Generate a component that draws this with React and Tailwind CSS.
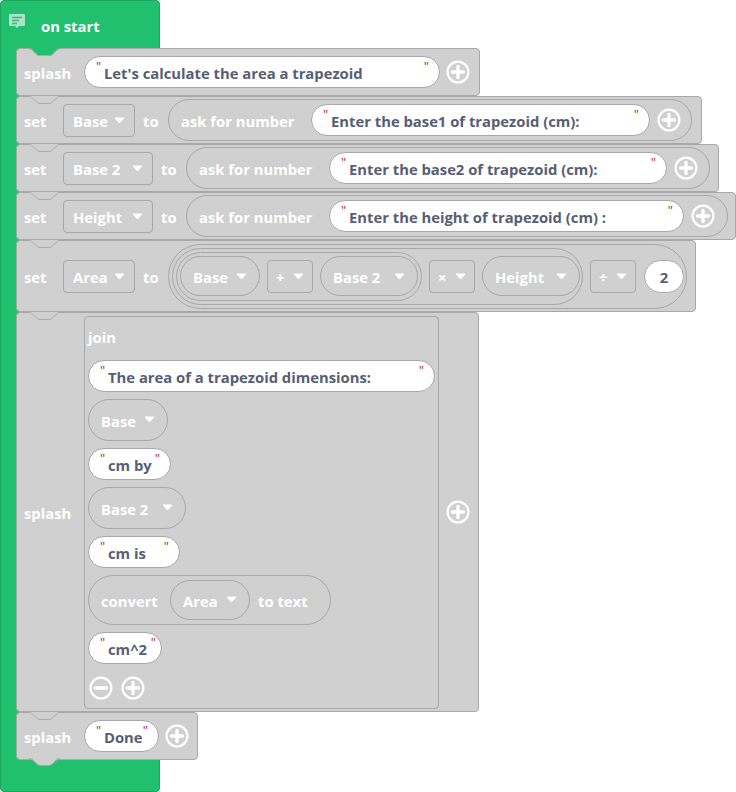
import React from "react";

const GRAY = "#d0d0d0";
const EDGE = "#a8a8a8";

// white ring with a plus or minus, used on every block that can grow
const RoundButton = ({ minus = false }) => (
  <svg width="24" height="24" viewBox="0 0 24 24" className="shrink-0">
    <circle cx="12" cy="12" r="10.4" fill="none" stroke="#fff" strokeWidth="2.2" />
    <path
      d={minus ? "M6.5 12h11" : "M6.5 12h11M12 6.5v11"}
      stroke="#fff"
      strokeWidth="3.4"
      strokeLinecap="round"
      fill="none"
    />
  </svg>
);

const Caret = () => (
  <svg width="11" height="7" viewBox="0 0 11 7" className="shrink-0">
    <path d="M1 1h9L5.500 6z" fill="#fff" stroke="#fff" strokeWidth="1" strokeLinejoin="round" />
  </svg>
);

const Label = ({ children, className = "" }) => (
  <span className={`pt-[2px] font-bold whitespace-nowrap text-white ${className}`}>{children}</span>
);

// square dropdown such as the variable picker
const Dropdown = ({ text, width, tight = false }) => (
  <div
    className={`flex h-[33px] shrink-0 items-center justify-between rounded-[4px] border border-[#a8a8a8] ${tight ? "px-[8px]" : "px-[9px]"}`}
    style={{ width }}
  >
    <Label>{text}</Label>
    <Caret />
  </div>
);

// round variable reporter
const VarPill = ({ text, width, height = 42 }) => (
  <div
    className="flex shrink-0 items-center justify-between rounded-full border border-[#a8a8a8] px-[12px]"
    style={{ width, height }}
  >
    <Label>{text}</Label>
    <Caret />
  </div>
);

const Quote = ({ className }) => (
  <span
    className={`absolute top-[1px] text-[13px] leading-[16px] font-normal text-[#b52a2a] ${className}`}
  >
    "
  </span>
);

// white string field with red quote marks
const StringPill = ({ text, width, quoteRight = "right-[10px]" }) => (
  <div
    className="relative flex h-[32px] shrink-0 items-center rounded-full border border-[#a8a8a8] bg-white pt-[2px] pl-[19px] font-bold whitespace-nowrap text-[#575e75]"
    style={{ width }}
  >
    <Quote className="left-[11px]" />
    {text}
    <Quote className={quoteRight} />
  </div>
);

// the dent at the top of a block, filled with whatever sits above it
const Notch = ({ fill = GRAY }) => (
  <svg width="40" height="10" viewBox="0 0 40 10" className="absolute -top-[1px] left-[9px]">
    <path d="M2 0v1h1c2 0 3 1 4 2l3 3c1 1 2 2 4 2h9c2 0 3-1 4-2l3-3c1-1 2-2 4-2h1V0z" fill={fill} />
    <path d="M2 .5h1c2 0 3 1 4 2l3 3c1 1 2 2 4 2h9c2 0 3-1 4-2l3-3c1-1 2-2 4-2h1" fill="none" stroke={EDGE} strokeWidth="1" />
  </svg>
);

const Tab = () => (
  <svg width="40" height="10" viewBox="0 0 40 10" className="absolute -bottom-[9px] left-[9px]">
    <path d="M2 0h1c2 0 3 1 4 2l3 3c1 1 2 2 4 2h9c2 0 3-1 4-2l3-3c1-1 2-2 4-2h1z" fill={GRAY} />
    <path d="M3 .5c2 0 3 1 4 2l3 3c1 1 2 2 4 2h9c2 0 3-1 4-2l3-3c1-1 2-2 4-2" fill="none" stroke={EDGE} strokeWidth="1" />
  </svg>
);

const Block = ({ width, height, notch, tab, children }) => (
  <div
    className="relative flex items-center rounded-[4px] border border-[#a8a8a8] bg-[#d0d0d0] pl-[7px]"
    style={{ width, height }}
  >
    <Notch fill={notch} />
    {children}
    {tab && <Tab />}
  </div>
);

const AskRow = ({ varName, varWidth, askWidth, strText, strWidth, blockWidth }) => (
  <Block width={blockWidth} height={48}>
    <Label className="w-[39px]">set</Label>
    <Dropdown text={varName} width={varWidth} />
    <Label className="ml-[8px] w-[25px]">to</Label>
    <div
      className="flex h-[42px] shrink-0 items-center rounded-full border border-[#a8a8a8] pl-[12px]"
      style={{ width: askWidth }}
    >
      <Label className="w-[130px]">ask for number</Label>
      <StringPill text={strText} width={strWidth} />
      <div className="ml-[7px]">
        <RoundButton />
      </div>
    </div>
  </Block>
);

const App = () => {
  return (
    <div className="relative h-[792px] w-[160px] rounded-[4px] border border-[#1ba85e] bg-[#20c06e] font-['Open_Sans',sans-serif] text-[14.8px] leading-[20px]">
      {/* Header */}
      <div className="relative flex h-[47px] items-center pl-[40px]">
        <svg width="16" height="15" viewBox="0 0 16 15" className="absolute top-[13px] left-[8px]">
          <path d="M1 0h14a1 1 0 0 1 1 1v10a1 1 0 0 1-1 1h-5l-2 2-2-2H1a1 1 0 0 1-1-1V1a1 1 0 0 1 1-1z" fill="#a6e6c5" />
          <path d="M3 3.500h10M3 6.500h7M3 9.500h5" stroke="#4fae7f" strokeWidth="1.400" fill="none" />
        </svg>
        <Label>on start</Label>
      </div>

      {/* Blocks */}
      <div className="ml-[15px] flex w-max flex-col">
        <Block width={464} height={48} notch="#20c06e">
          <Label className="w-[60px]">splash</Label>
          <StringPill text="Let's calculate the area a trapezoid" width={356} />
          <div className="ml-[6px]">
            <RoundButton />
          </div>
        </Block>

        <AskRow
          blockWidth={686}
          varName="Base"
          varWidth={72}
          askWidth={524}
          strText="Enter the base1 of trapezoid (cm):"
          strWidth={339}
        />
        <AskRow
          blockWidth={703}
          varName="Base 2"
          varWidth={90}
          askWidth={524}
          strText="Enter the base2 of trapezoid (cm):"
          strWidth={338}
        />
        <AskRow
          blockWidth={720}
          varName="Height"
          varWidth={90}
          askWidth={542}
          strText="Enter the height of trapezoid (cm) :"
          strWidth={355}
        />

        {/* Area row with nested math reporters */}
        <Block width={680} height={72}>
          <Label className="w-[39px]">set</Label>
          <Dropdown text="Area" width={72} />
          <Label className="ml-[8px] w-[25px]">to</Label>
          <div className="flex h-[65px] w-[519px] shrink-0 items-center rounded-full border border-[#a8a8a8] pl-[3px]">
            <div className="flex h-[57px] w-[411px] shrink-0 items-center rounded-full border border-[#a8a8a8] pl-[3px]">
              <div className="flex h-[49px] w-[246px] shrink-0 items-center gap-[7px] rounded-full border border-[#a8a8a8] pl-[3px]">
                <VarPill text="Base" width={80} height={40} />
                <Dropdown text="+" width={46} tight />
                <VarPill text="Base 2" width={98} height={40} />
              </div>
              <div className="ml-[7px]">
                <Dropdown text="×" width={46} tight />
              </div>
              <div className="ml-[7px]">
                <VarPill text="Height" width={98} height={40} />
              </div>
            </div>
            <div className="ml-[7px]">
              <Dropdown text="÷" width={46} tight />
            </div>
            <div className="ml-[8px] flex h-[33px] w-[40px] shrink-0 items-center justify-center rounded-full border border-[#a8a8a8] bg-white pt-[2px] font-bold text-[#575e75]">
              2
            </div>
          </div>
        </Block>

        {/* Big join block */}
        <Block width={463} height={400}>
          <Label className="w-[60px]">splash</Label>
          <div className="flex h-[393px] w-[355px] shrink-0 flex-col items-start gap-[7px] rounded-[4px] border border-[#a8a8a8] pl-[3px]">
            <Label className="flex h-[36px] items-center pt-[4px]">join</Label>
            <StringPill text="The area of a trapezoid dimensions:" width={347} />
            <VarPill text="Base" width={80} />
            <StringPill text="cm by" width={83} />
            <VarPill text="Base 2" width={98} />
            <StringPill text="cm is" width={92} />
            <div className="flex h-[50px] w-[243px] items-center rounded-full border border-[#a8a8a8] pl-[12px]">
              <Label className="w-[69px]">convert</Label>
              <VarPill text="Area" width={80} height={40} />
              <Label className="ml-[8px]">to text</Label>
            </div>
            <StringPill text="cm^2" width={74} quoteRight="right-[5px]" />
            <div className="mt-[5px] flex gap-[8px] pl-[1px]">
              <RoundButton minus />
              <RoundButton />
            </div>
          </div>
          <div className="ml-[7px]">
            <RoundButton />
          </div>
        </Block>

        <Block width={182} height={48} tab>
          <Label className="w-[60px]">splash</Label>
          <StringPill text="Done" width={75} />
          <div className="ml-[6px]">
            <RoundButton />
          </div>
        </Block>
      </div>
    </div>
  );
};

export default App;
